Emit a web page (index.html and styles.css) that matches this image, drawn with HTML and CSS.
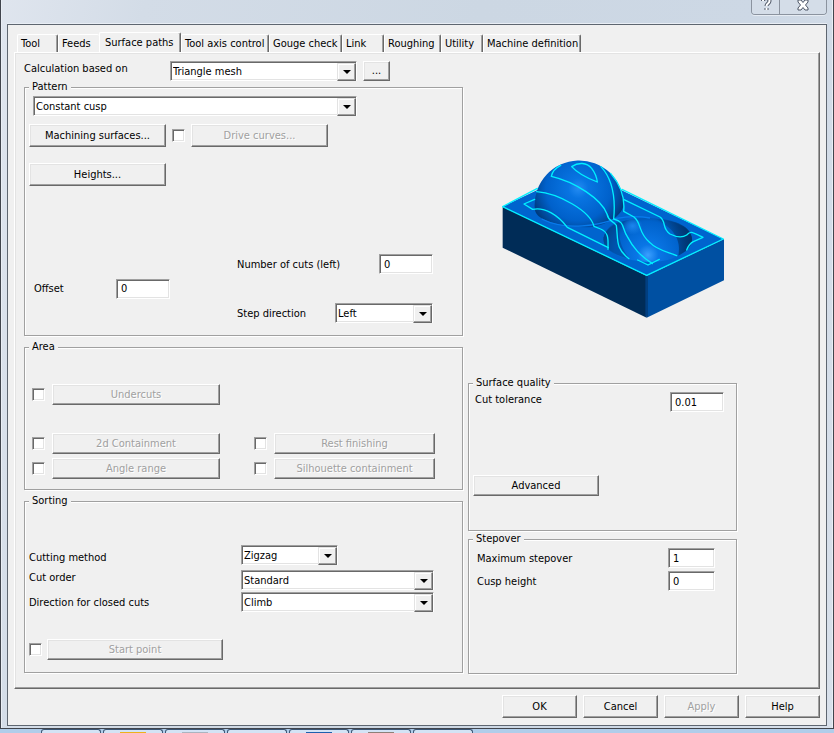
FILE: index.html
```html
<!DOCTYPE html>
<html lang="en">
<head>
  <meta charset="UTF-8" />
  <meta name="viewport" content="width=device-width, initial-scale=1" />
  <title>Surface paths</title>
  <link rel="stylesheet" href="styles.css">
</head>

<body>
  <div class="window">
    <div class="titlebar">
      <div class="caption">
        <button type="button" class="caption-help" aria-label="Help">
          <svg width="12" height="16" viewBox="0 0 12 16">
            <path d="M3 5C3 1 9.500 1 9.500 5C9.500 7.500 6.500 7.500 6.500 10M6.500 12v2" fill="none" stroke="#4d5666" stroke-width="4" />
            <path d="M3 5C3 1 9.500 1 9.500 5C9.500 7.500 6.500 7.500 6.500 10M6.500 12v2" fill="none" stroke="#fff" stroke-width="2" />
          </svg>
        </button>
        <button type="button" class="caption-close" aria-label="Close">
          <svg width="12" height="12" viewBox="0 0 12 12">
            <path d="M1 1h3l2 2.500L8 1h3v2L8.500 6L11 9v2H8L6 8.500L4 11H1V9l2.500-3L1 3z" fill="#fff" stroke="#4d5666" />
          </svg>
        </button>
      </div>
    </div>

    <form class="dialog">
      <div class="tabs" role="tablist">
        <button type="button" class="tab" role="tab">Tool</button>
        <button type="button" class="tab" role="tab">Feeds</button>
        <button type="button" class="tab active" role="tab" aria-selected="true">Surface paths</button>
        <button type="button" class="tab" role="tab">Tool axis control</button>
        <button type="button" class="tab" role="tab">Gouge check</button>
        <button type="button" class="tab" role="tab">Link</button>
        <button type="button" class="tab" role="tab">Roughing</button>
        <button type="button" class="tab" role="tab">Utility</button>
        <button type="button" class="tab" role="tab">Machine definition</button>
      </div>

      <div class="panel" role="tabpanel">
        <div class="column">
          <div class="based-on">
            <label for="based">Calculation based on</label>
            <span class="combo"><select id="based"><option>Triangle mesh</option></select></span>
            <button type="button" class="btn more">...</button>
          </div>

          <fieldset class="pattern">
            <legend>Pattern</legend>
            <span class="combo pattern-type"><select aria-label="Pattern"><option>Constant cusp</option></select></span>
            <div class="pattern-buttons">
              <button type="button" class="btn">Machining surfaces...</button>
              <input type="checkbox" aria-label="Use drive curves" />
              <button type="button" class="btn" disabled>Drive curves...</button>
            </div>
            <div class="pattern-buttons heights">
              <button type="button" class="btn">Heights...</button>
            </div>
            <div class="pattern-fields">
              <div class="field offset">
                <label for="offset">Offset</label>
                <input type="text" id="offset" value="0" />
              </div>
              <div class="cuts">
                <div class="field">
                  <label for="cuts">Number of cuts (left)</label>
                  <input type="text" id="cuts" value="0" />
                </div>
                <div class="field">
                  <label for="step">Step direction</label>
                  <span class="combo step"><select id="step"><option>Left</option></select></span>
                </div>
              </div>
            </div>
          </fieldset>

          <fieldset class="area">
            <legend>Area</legend>
            <div class="toggle undercuts">
              <input type="checkbox" aria-label="Use undercuts" />
              <button type="button" class="btn" disabled>Undercuts</button>
            </div>
            <div class="toggle">
              <input type="checkbox" aria-label="Use 2d containment" />
              <button type="button" class="btn" disabled>2d Containment</button>
            </div>
            <div class="toggle">
              <input type="checkbox" aria-label="Use rest finishing" />
              <button type="button" class="btn" disabled>Rest finishing</button>
            </div>
            <div class="toggle">
              <input type="checkbox" aria-label="Use angle range" />
              <button type="button" class="btn" disabled>Angle range</button>
            </div>
            <div class="toggle">
              <input type="checkbox" aria-label="Use silhouette containment" />
              <button type="button" class="btn" disabled>Silhouette containment</button>
            </div>
          </fieldset>

          <fieldset class="sorting">
            <legend>Sorting</legend>
            <div class="field method">
              <label for="method">Cutting method</label>
              <span class="combo"><select id="method"><option>Zigzag</option></select></span>
            </div>
            <div class="field order">
              <label for="order">Cut order</label>
              <span class="combo"><select id="order"><option>Standard</option></select></span>
            </div>
            <div class="field closed">
              <label for="closed">Direction for closed cuts</label>
              <span class="combo"><select id="closed"><option>Climb</option></select></span>
            </div>
            <div class="start">
              <input type="checkbox" aria-label="Use start point" />
              <button type="button" class="btn" disabled>Start point</button>
            </div>
          </fieldset>
        </div>

        <div class="column">
          <div class="preview">
            <svg width="223" height="160" viewBox="36 57 669 480" role="img" aria-label="Constant cusp toolpath">
              <defs>
                <radialGradient id="ball" gradientUnits="userSpaceOnUse" cx="265" cy="145" r="150">
                  <stop offset="0" stop-color="#248cf2" />
                  <stop offset=".2" stop-color="#0874e2" />
                  <stop offset=".65" stop-color="#0061cb" />
                  <stop offset=".85" stop-color="#004a9c" />
                  <stop offset="1" stop-color="#003674" />
                </radialGradient>
                <radialGradient id="bowl" gradientUnits="userSpaceOnUse" cx="474" cy="345" r="155">
                  <stop offset="0" stop-color="#3ba0ff" />
                  <stop offset=".2" stop-color="#0a76e6" />
                  <stop offset=".65" stop-color="#0062cc" />
                  <stop offset="1" stop-color="#00336c" />
                </radialGradient>
                <linearGradient id="wall">
                  <stop offset="0" stop-color="#003a7c" stop-opacity="0" />
                  <stop offset="1" stop-color="#00336c" />
                </linearGradient>
                <radialGradient id="glint">
                  <stop offset="0" stop-color="#1c86ee" />
                  <stop offset="1" stop-color="#1c86ee" stop-opacity="0" />
                </radialGradient>
              </defs>
              <!-- block -->
              <path d="M38 200V323L470 533V407z" fill="#002c57" />
              <path d="M470 407L702 297V421L470 533z" fill="#0050a2" />
              <path d="M470 408V530" stroke="#013f80" stroke-width="8" />
              <path d="M38 200L268 90L700 297L470 407z" fill="#0064ce" />
              <!-- pocket and dome -->
              <path d="M341 292C350 255 400 236 465 234C545 234 604 260 606 298C606 338 545 366 480 366C400 364 335 335 341 292z" fill="url(#bowl)" />
              <path d="M341 292C350 262 370 250 392 244C380 290 395 330 420 357C370 345 335 320 341 292z" fill="#004a9a" opacity=".6" />
              <path d="M490 235C560 238 605 262 606 298C605 318 590 335 565 347C575 300 550 260 490 235z" fill="url(#wall)" />
              <ellipse cx="428" cy="258" rx="30" ry="26" fill="url(#glint)" />
              <path d="M134 200A133 133 0 0 1 401 190C401 225 355 252 312 260C270 266 190 256 155 235C138 224 134 214 134 200z" fill="url(#ball)" />
              <path d="M155 237C230 275 330 255 380 235Q430 225 480 234" fill="none" stroke="#087bec" stroke-width="4" />
              <!-- toolpath -->
              <g fill="none" stroke="#00f0ff" stroke-width="4" stroke-linejoin="round" stroke-linecap="round">
                <path d="M142 145L38 200L470 406L700 297L396 148" />
                <path d="M134 178L102 192L128 208C165 200 205 226 232 262L355 323" />
                <path d="M140 155C205 160 300 212 312 259L332 267C358 278 354 300 354 328" />
                <path d="M212 76C195 85 186 97 184 109C255 125 335 178 351 222C356 245 366 240 379 256C385 300 375 325 417 356" />
                <path d="M245 80C265 66 290 67 305 85C315 98 320 110 322 126C298 117 262 99 245 80z" />
                <path d="M333 80C365 115 378 165 371 237C406 246 395 264 412 290C430 325 450 346 487 371" />
                <path d="M362 100C392 135 405 175 401 214L432 231C456 250 443 278 480 308C500 330 530 335 560 347" />
                <path d="M402 179L510 231C530 245 514 264 540 282C560 292 578 293 590 285C602 272 604 275 639 292L610 305C598 311 594 320 590 330" />
                <path d="M443 360L474 375L508 358" />
              </g>
            </svg>
          </div>

          <fieldset class="quality">
            <legend>Surface quality</legend>
            <div class="field">
              <label for="tolerance">Cut tolerance</label>
              <input type="text" id="tolerance" value="0.01" />
            </div>
            <button type="button" class="btn">Advanced</button>
          </fieldset>

          <fieldset class="stepover">
            <legend>Stepover</legend>
            <div class="field">
              <label for="maxstep">Maximum stepover</label>
              <input type="text" id="maxstep" value="1" />
            </div>
            <div class="field">
              <label for="cusp">Cusp height</label>
              <input type="text" id="cusp" value="0" />
            </div>
          </fieldset>
        </div>
      </div>

      <div class="actions">
        <button type="button" class="btn">OK</button>
        <button type="button" class="btn">Cancel</button>
        <button type="button" class="btn" disabled>Apply</button>
        <button type="button" class="btn">Help</button>
      </div>
    </form>
  </div>

  <div class="taskbar">
    <span class="task"></span>
    <span class="task yellow"></span>
    <span class="task grey"></span>
    <span class="task"></span>
    <span class="task blue"></span>
    <span class="task brown"></span>
    <span class="task"></span>
  </div>
</body>
</html>
```

FILE: styles.css
```css
/* --- Global --- */
* { box-sizing: border-box; margin: 0; padding: 0; }
body {
  display: flex;
  flex-direction: column;
  min-height: 100vh;
  font-family: Tahoma, "DejaVu Sans Condensed", sans-serif;
  font-size: 11px;
  line-height: 14px;
  color: #000;
  background: #b0cdea;
}
button, input, select { font: inherit; color: inherit; }

/* --- Window frame --- */
.window {
  flex: 1;
  display: flex;
  flex-direction: column;
  padding: 0 6px 2px;
  border: solid #41454d;
  border-width: 0 1px 1px;
  box-shadow: inset 1px 0 #e9eef5, inset -1px 0 #e9eef5;
  background: linear-gradient(100deg, #dfe5ee, #d3dce7 15%, #ccd7e3 50%, #cdd8e5 80%, #d9e1eb);
}
.titlebar {
  display: flex;
  justify-content: flex-end;
  height: 24px;
}
.caption {
  display: flex;
  height: 15px;
  border: 1px solid #8b939f;
  border-top: 0;
  border-radius: 0 0 4px 4px;
  box-shadow: 0 1px #e6ecf3;
}
.caption button {
  display: flex;
  align-items: flex-end;
  justify-content: center;
  border: 0;
  background: #d4dde8;
}
.caption .caption-help {
  width: 28px;
  padding-bottom: 2px;
  border-right: 1px solid #8b939f;
  border-radius: 0 0 0 3px;
}
.caption .caption-close {
  width: 46px;
  padding-bottom: 3px;
  border-radius: 0 0 3px 0;
}
.dialog {
  flex: 1;
  display: flex;
  flex-direction: column;
  padding: 7px 6px;
  border: 1px solid #5e6670;
  background: #f0f0f0;
  box-shadow: 0 -1px #e9eef5;
}

/* --- Tabs --- */
.tabs {
  display: grid;
  grid-template-columns: 41px 41px 82px 88px 73px 42px 57px 42px 98px;
  align-items: end;
  height: 20px;
  padding-left: 3px;
}
.tab {
  height: 18px;
  padding: 1px 0 0 3px;
  text-align: left;
  white-space: nowrap;
  border: solid #fff;
  border-width: 1px 1px 0;
  border-right-color: #696969;
  border-radius: 2px 2px 0 0;
  box-shadow: inset -1px 0 #a0a0a0;
  background: #f0f0f0;
}
.tab:has(+ .active) {
  border-right: 0;
  box-shadow: none;
}
.tab.active {
  height: 21px;
  margin-bottom: -1px;
  padding: 0 0 1px 5px;
}

/* --- Tab panel --- */
.panel {
  flex: 1;
  display: grid;
  grid-template-columns: 439fr 269fr;
  gap: 5px;
  padding: 8px 82px 14px 9px;
  border: 1px solid #696969;
  border-top-color: #fff;
  border-left-color: #fff;
  box-shadow: inset -1px -1px #a0a0a0, inset 1px 1px #e3e3e3;
}
.column {
  display: flex;
  flex-direction: column;
}

fieldset {
  min-width: 0;
  padding: 3px 4px 0;
  border: 1px solid #a0a0a0;
  box-shadow: 1px 1px #fff, inset 1px 1px #fff;
}
legend {
  padding: 0 3px;
  line-height: 12px;
  background: #f0f0f0;
}

/* --- Controls --- */
label { padding-top: 1px; }
.btn {
  height: 21px;
  text-align: center;
  border: 1px solid #696969;
  border-top-color: #fff;
  border-left-color: #fff;
  box-shadow: inset -1px -1px #a0a0a0, inset 1px 1px #e3e3e3;
  background: #f0f0f0;
}
.btn:disabled {
  color: #a0a0a0;
  text-shadow: 1px 1px #fff;
}
input, select {
  appearance: none;
  border: 1px solid #fff;
  border-top-color: #a0a0a0;
  border-left-color: #a0a0a0;
  border-radius: 0;
  box-shadow: inset 1px 1px #696969, inset -1px -1px #e3e3e3;
  background: #fff;
}
input[type="text"] {
  width: 54px;
  height: 20px;
  padding: 0 4px;
}
input[type="checkbox"] {
  flex: none;
  width: 13px;
  height: 13px;
}
.combo {
  position: relative;
  display: block;
}
.combo select {
  display: block;
  width: 100%;
  height: 20px;
  padding: 1px 20px 0 2px;
}
.combo::before {
  content: "";
  position: absolute;
  top: 2px;
  right: 1px;
  width: 17px;
  height: 16px;
  border: 1px solid #696969;
  border-top-color: #e3e3e3;
  border-left-color: #e3e3e3;
  box-shadow: inset -1px -1px #a0a0a0, inset 1px 1px #fff;
  background: #f0f0f0;
  pointer-events: none;
}
.combo::after {
  content: "";
  position: absolute;
  top: 9px;
  right: 6px;
  border: 4px solid transparent;
  border-top-color: #000;
  border-bottom: 0;
  pointer-events: none;
}
.field {
  display: flex;
  align-items: center;
}

/* --- Calculation and pattern --- */
.based-on {
  display: grid;
  grid-template-columns: 146px 187px 27px;
  align-items: start;
}
.more {
  height: 20px;
  margin-left: 6px;
  width: 27px;
}
.pattern { padding-bottom: 12px; }
.pattern-type {
  width: 324px;
  margin-left: 4px;
}
.pattern-buttons {
  display: flex;
  align-items: center;
  gap: 6px;
  margin-top: 8px;
}
.pattern-buttons .btn {
  width: 137px;
  height: 23px;
}
.heights { margin-top: 16px; }
.pattern-fields {
  display: flex;
  align-items: center;
  margin-top: 68px;
  padding-left: 5px;
}
.offset { width: 203px; }
.offset label { width: 82px; }
.cuts {
  display: flex;
  flex-direction: column;
  gap: 29px;
  width: 196px;
}
.cuts .field { justify-content: space-between; }
.step { width: 98px; }

/* --- Area --- */
.area {
  display: grid;
  grid-template-columns: 188px 181px;
  gap: 4px 34px;
  margin-top: 5px;
  padding: 31px 7px 10px;
}
.area legend { margin-left: -3px; }
.toggle {
  display: flex;
  align-items: center;
  gap: 7px;
}
.toggle .btn { flex: 1; }
.undercuts {
  grid-column: 1 / 2;
  margin-bottom: 24px;
}
.undercuts + .toggle { grid-column: 1; }

/* --- Sorting --- */
.sorting {
  margin-top: 5px;
  padding: 38px 4px 12px;
}
.sorting label { width: 212px; }
.sorting .combo { width: 193px; }
.sorting .method .combo { width: 97px; }
.method { align-items: flex-end; }
.order {
  align-items: flex-start;
  margin-top: 5px;
}
.closed { margin-top: 2px; }
.start {
  display: flex;
  align-items: center;
  gap: 5px;
  margin-top: 27px;
}
.start .btn { width: 176px; }

/* --- Right column --- */
.preview {
  flex: 1;
  padding: 98px 0 0 34px;
}
.preview svg { display: block; }
.quality { padding-bottom: 34px; }
.quality .field {
  align-items: flex-start;
  justify-content: space-between;
  padding: 0 8px 0 2px;
}
.quality .btn {
  display: block;
  width: 126px;
  margin-top: 63px;
}
.stepover {
  margin-top: 2px;
  padding-bottom: 82px;
}
.stepover .field {
  justify-content: space-between;
  padding: 0 17px 0 4px;
}
.stepover .field + .field { margin-top: 3px; }
.stepover input[type="text"] { width: 47px; }

/* --- Dialog buttons --- */
.actions {
  display: flex;
  justify-content: flex-end;
  gap: 6px;
  margin-top: 6px;
}
.actions .btn {
  width: 75px;
  height: 23px;
}

/* --- Taskbar --- */
.taskbar {
  display: flex;
  gap: 2px;
  height: 4px;
  padding-left: 41px;
  overflow: hidden;
}
.task {
  width: 60px;
  padding: 2px 16px 0;
  border: 1px solid #3c5674;
  border-bottom: 0;
  border-radius: 3px 3px 0 0;
  background: #d3e3f5;
}
.task::before {
  content: "";
  display: block;
  height: 1px;
}
.task.yellow::before { background: #eeb11c; }
.task.grey::before { background: #aab4c0; }
.task.blue::before { background: #1d5fae; }
.task.brown::before { background: #8d8078; }
```
